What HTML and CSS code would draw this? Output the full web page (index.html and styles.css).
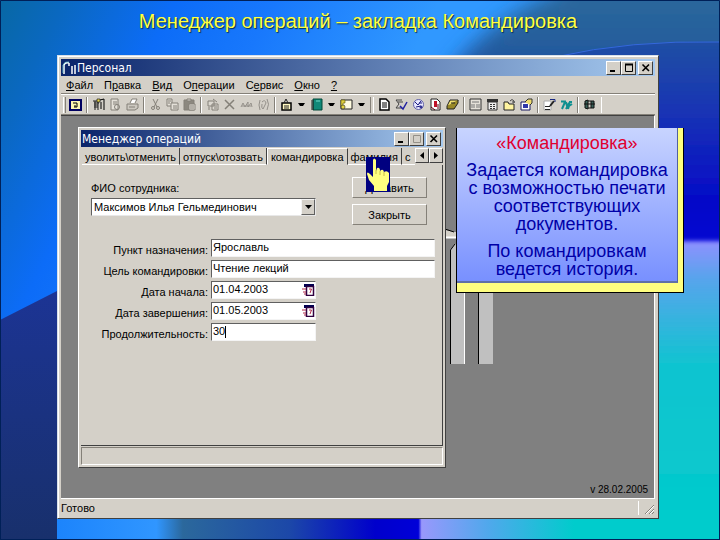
FILE: index.html
```html
<!DOCTYPE html>
<html lang="ru">
  <head>
    <meta charset="UTF-8" />
    <meta name="viewport" content="width=device-width, initial-scale=1.0" />
    <title>Менеджер операций</title>
    <link rel="stylesheet" href="styles.css" />
  </head>
  <body>
    <div class="slide">
      <svg class="backdrop" viewBox="0 0 720 540" preserveAspectRatio="none" aria-hidden="true">
        <defs>
          <linearGradient id="sky" gradientUnits="userSpaceOnUse" x1="0" y1="0" x2="440" y2="220">
            <stop offset="0" stop-color="#0868a4" />
            <stop offset="0.12" stop-color="#0a68c0" />
            <stop offset="0.32" stop-color="#0c6cf8" />
            <stop offset="0.5" stop-color="#1878fc" />
            <stop offset="0.8" stop-color="#3098ff" />
            <stop offset="1" stop-color="#3098ff" />
          </linearGradient>
          <linearGradient id="night" gradientUnits="userSpaceOnUse" x1="0" y1="0" x2="0" y2="241">
            <stop offset="0" stop-color="#2a689c" />
            <stop offset="0.2" stop-color="#245c9c" />
            <stop offset="0.45" stop-color="#1c3cb0" />
            <stop offset="0.85" stop-color="#0000cc" />
            <stop offset="1" stop-color="#0000d8" />
          </linearGradient>
          <linearGradient id="sea" x1="0" y1="0" x2="0" y2="1">
            <stop offset="0" stop-color="#9090ff" />
            <stop offset="0.12" stop-color="#58a4ec" />
            <stop offset="0.4" stop-color="#10c4d0" />
            <stop offset="1" stop-color="#00cccc" />
          </linearGradient>
          <linearGradient id="floor" x1="0" y1="0" x2="1" y2="0">
            <stop offset="0" stop-color="#1c84fc" />
            <stop offset="0.15" stop-color="#3096ff" />
            <stop offset="0.19" stop-color="#2b689c" />
            <stop offset="0.35" stop-color="#1c48a8" />
            <stop offset="0.48" stop-color="#0000cc" />
            <stop offset="0.545" stop-color="#0000d8" />
            <stop offset="0.55" stop-color="#9898fc" />
            <stop offset="0.65" stop-color="#50a8ec" />
            <stop offset="0.78" stop-color="#00cccc" />
            <stop offset="1" stop-color="#00cccc" />
          </linearGradient>
          <linearGradient id="deep" x1="0" y1="0" x2="0" y2="1">
            <stop offset="0" stop-color="#1c3494" />
            <stop offset="1" stop-color="#18306c" />
          </linearGradient>
          <filter id="soft" x="-20%" y="-20%" width="140%" height="140%">
            <feGaussianBlur stdDeviation="10" />
          </filter>
          <filter id="softer" x="-20%" y="-20%" width="140%" height="140%">
            <feGaussianBlur stdDeviation="2" />
          </filter>
        </defs>
        <rect width="720" height="540" fill="url(#sky)" />
        <path d="M450 70Q490 20 560 -10V-40H770V270H450Z" fill="url(#night)" filter="url(#soft)" />
        <path d="M555 57Q630 40 720 42V240H555Z" fill="#1020c0" opacity="0.25" />
        <path d="M555 57Q630 40 720 42" fill="none" stroke="#3468dc" stroke-width="1" />
        <rect x="600" y="241" width="130" height="310" fill="url(#sea)" filter="url(#softer)" />
        <rect x="57" y="510" width="663" height="30" fill="url(#floor)" />
        <path d="M0 320L57 291V540H0Z" fill="url(#deep)" />
        <path d="M.5 540V.5H719.5V540M0 539.5H720" fill="none" stroke="#002058" />
      </svg>

      <h1 class="slide-title">Менеджер операций – закладка Командировка</h1>

      <div class="app">
        <div class="titlebar">
          <svg class="app-icon" width="14" height="14" viewBox="0 0 14 14" aria-hidden="true">
            <path d="M2 13V4Q3 1 7 2M7 2V5M10 5V13M13 4V13" fill="none" stroke="#fff" stroke-width="1.5" />
            <path d="M1 12V4Q3 0 7 1" fill="none" stroke="#7fd0d8" stroke-width="0.8" />
          </svg>
          <span class="caption">Персонал</span>
          <button class="win-btn" aria-label="Свернуть"><svg width="10" height="10"><path d="M1 8H6" stroke="#000" stroke-width="2" /></svg></button>
          <button class="win-btn" aria-label="Развернуть"><svg width="10" height="10"><path d="M1.5 1V8.5H8.500V1M1 1.500H9" fill="none" stroke="#000" /><path d="M1 1.500H9" stroke="#000" stroke-width="2" /></svg></button>
          <button class="win-btn win-close" aria-label="Закрыть"><svg width="10" height="10"><path d="M1.500 1.500L8 8M8 1.500L1.500 8" stroke="#000" stroke-width="1.600" /></svg></button>
        </div>

        <nav class="menu">
          <a href="#"><u>Ф</u>айл</a>
          <a href="#">П<u>р</u>авка</a>
          <a href="#"><u>В</u>ид</a>
          <a href="#">О<u>п</u>ерации</a>
          <a href="#">С<u>е</u>рвис</a>
          <a href="#"><u>О</u>кно</a>
          <a href="#"><u>?</u></a>
        </nav>

        <div class="toolbar">
          <span class="grip"></span>
          <button class="tool" aria-label="Карточка"><svg width="13" height="13"><rect x="1" y="2" width="11" height="10" fill="#fff8b0" stroke="#000060" stroke-width="2" /><path d="M4 5H8V9H5M6 7V9" fill="none" stroke="#000" /></svg></button>
          <span class="sep"></span>
          <button class="tool" aria-label="Структура"><svg width="13" height="13"><path d="M1 3H7M2 5H7M2 7H6M2 9H6M3 3V12M6 4V12" stroke="#222" fill="none" /><path d="M8 2L12 1V12M9 4V11" fill="none" stroke="#000" /><path d="M5 1H8V4H5Z" fill="#e8d850" stroke="#000" stroke-width="0.6" /></svg></button>
          <button class="tool" aria-label="Просмотр"><svg width="13" height="13"><path d="M2 1H9V12H2Z" fill="#e4e0d8" stroke="#848078" /><path d="M4 4H8M4 6H8" stroke="#848078" /><circle cx="8" cy="9" r="2.500" fill="none" stroke="#848078" /></svg></button>
          <button class="tool" aria-label="Печать"><svg width="13" height="13"><path d="M4 5L6 1H11L9 5" fill="#fff" stroke="#848078" /><path d="M1 6H12V10L9 12H1Z" fill="#ccc8c0" stroke="#848078" /><path d="M3 9H9" stroke="#848078" /></svg></button>
          <span class="sep"></span>
          <button class="tool" aria-label="Вырезать"><svg width="13" height="13"><path d="M4 1L8 9M9 1L5 9" stroke="#848078" /><circle cx="4" cy="10" r="1.500" fill="none" stroke="#848078" /><circle cx="9" cy="10" r="1.500" fill="none" stroke="#848078" /></svg></button>
          <button class="tool" aria-label="Копировать"><svg width="13" height="13"><path d="M1 1H6V8H1Z" fill="#e4e0d8" stroke="#848078" /><path d="M5 5H12V12H5Z" fill="#e4e0d8" stroke="#848078" /><path d="M2 3H5M2 5H4M7 8H11M7 10H11" stroke="#848078" /></svg></button>
          <button class="tool" aria-label="Вставить"><svg width="13" height="13"><path d="M1 2H11V12H1Z" fill="#8c887f" stroke="#848078" /><path d="M4 1H8V3H4Z" fill="#d4d0c8" stroke="#848078" /><path d="M6 6H12V12H6Z" fill="#e4e0d8" stroke="#848078" /><path d="M7 8H11M7 10H11" stroke="#848078" /></svg></button>
          <span class="sep"></span>
          <button class="tool" aria-label="Обновить"><svg width="13" height="13"><path d="M2 3H8V8H2ZM6 6H12V12H6Z" fill="#dcd8d0" stroke="#848078" /><path d="M7 1L11 4M3 9V12M8 8H11M8 10H11" stroke="#848078" /></svg></button>
          <button class="tool" aria-label="Удалить"><svg width="13" height="13"><path d="M2 2L11 11M11 2L2 11" stroke="#848078" stroke-width="1.500" /></svg></button>
          <button class="tool" aria-label="Найти"><svg width="13" height="13"><path d="M1 9L3 5L5 9L8 4V9L11 5L12 9M2 8H11" fill="none" stroke="#94908a" /></svg></button>
          <button class="tool" aria-label="Вложение"><svg width="13" height="13"><path d="M3 2Q1 7 3 12M10 1Q13 6 10 12M5 4Q8 1 9 5L6 11Q4 10 5 6" fill="none" stroke="#94908a" /></svg></button>
          <span class="sep"></span>
          <button class="tool" aria-label="Документ"><svg width="13" height="13"><path d="M2 5H11V12H2Z" fill="#fff8c0" stroke="#000" stroke-width="1.500" /><path d="M4 5L6 1L8 5M4 8H9M4 10H9" fill="none" stroke="#222" /></svg></button>
          <button class="drop" aria-label="Список документов"><svg width="7" height="5"><path d="M0 1H7L5 4H2Z" /></svg></button>
          <button class="tool" aria-label="Журнал"><svg width="13" height="13"><path d="M3 1H12V12H3Z" fill="#108878" stroke="#004838" /><path d="M1 3H4M1 5H4M1 7H4M1 9H4M1 11H4" stroke="#222" /><path d="M6 3H10" stroke="#70d8c8" /></svg></button>
          <button class="drop" aria-label="Список журналов"><svg width="7" height="5"><path d="M0 1H7L5 4H2Z" /></svg></button>
          <button class="tool" aria-label="Заметка"><svg width="13" height="13"><path d="M1 2H12V11H1Z" fill="#fffce0" stroke="#222" /><path d="M1 2H5V5H3V9H1Z" fill="#e0d040" stroke="#605800" stroke-width="0.600" /><circle cx="3" cy="9" r="2" fill="#e8d840" stroke="#222" stroke-width="0.600" /></svg></button>
          <button class="drop" aria-label="Список заметок"><svg width="7" height="5"><path d="M0 1H7L5 4H2Z" /></svg></button>
          <span class="sep sep-double"></span>
          <button class="tool" aria-label="Приказ"><svg width="13" height="13"><path d="M2 1H8L11 4V12H2Z" fill="#fff" stroke="#000" stroke-width="1.500" /><path d="M4 5H9M4 7H9M4 9H9" stroke="#000" /></svg></button>
          <button class="tool" aria-label="Проверка"><svg width="13" height="13"><path d="M1 2H7M3 4H8M1 10H7M1 2L4 6L1 10" fill="none" stroke="#444" /><path d="M5 8L8 11L12 4" fill="none" stroke="#2020a0" stroke-width="1.500" /></svg></button>
          <button class="tool" aria-label="Табель"><svg width="13" height="13"><circle cx="6.500" cy="6.500" r="5" fill="#e8e8ff" stroke="#6060a8" /><path d="M3 4L6 7L9 3M4 9L9 8M7 5H10" stroke="#181880" fill="none" /><circle cx="9" cy="9" r="1.500" fill="#303090" /></svg></button>
          <button class="tool" aria-label="Отчёт"><svg width="13" height="13"><path d="M2 1H8L11 4V12H2Z" fill="#fff" stroke="#222" /><path d="M5 3H8V9H5Z" fill="#c01028" /><path d="M2 9L6 12M9 6V11" stroke="#600010" /></svg></button>
          <button class="tool" aria-label="Книга"><svg width="13" height="13"><path d="M4 2H12L9 8H1Z" fill="#f0e070" stroke="#222" /><path d="M1 8V11H8L12 5V2" fill="#988828" stroke="#222" /><path d="M5 5H9" stroke="#222" /></svg></button>
          <span class="sep"></span>
          <button class="tool" aria-label="Таблица"><svg width="13" height="13"><path d="M1 1H12V12H1Z" fill="#e4e0d8" stroke="#333" /><path d="M3 4H10M3 6V10M5 6V10M8 6V10M10 6V10" stroke="#777" /></svg></button>
          <button class="tool" aria-label="Календарь"><svg width="13" height="13"><path d="M1 1H12V4H1Z" fill="#333" /><path d="M2 4H11V12H2Z" fill="#eee" stroke="#333" /><path d="M4 6.500H9M4 8.500H9M4 10.500H9" stroke="#333" stroke-dasharray="2 1" /></svg></button>
          <button class="tool" aria-label="Папка"><svg width="13" height="13"><path d="M1 4H5L6 6H11V12H1Z" fill="#fff4a0" stroke="#222" /><path d="M7 3Q9 0 11 3V5M9 4H12" fill="none" stroke="#444" /></svg></button>
          <button class="tool" aria-label="Свойства"><svg width="13" height="13"><path d="M1 4H10V12H1Z" fill="#fff" stroke="#181860" /><path d="M3 6H8V10H3Z" fill="#3038a8" /><path d="M5 4L8 1H12V5L10 7" fill="#f0dc70" stroke="#333" /></svg></button>
          <span class="sep"></span>
          <button class="tool" aria-label="Изменить"><svg width="13" height="13"><path d="M1 3H8V12H1Z" fill="#fff" stroke="#aaa" /><path d="M2 8.500H7M2 11.500H7" stroke="#222" /><path d="M7 8L11 3" stroke="#222" stroke-width="2" /><path d="M7 1.500H12V4" fill="none" stroke="#182880" /></svg></button>
          <button class="tool" aria-label="Тип"><svg width="13" height="13"><path d="M1 3.500H6M5 4L2 11M6 4L7 8L10 4L6 11M9 4H12M12 6L9 8L8 11" fill="none" stroke="#109090" stroke-width="2" /></svg></button>
          <span class="sep"></span>
          <button class="tool" aria-label="Помощь"><svg width="13" height="13"><path d="M2 3L5 2V11L2 10ZM8 3H11V10H8Z" fill="#386058" stroke="#111" /><path d="M5 3H8M5 10H8M1 6H12" stroke="#111" /></svg></button>
          <span class="sep sep-end"></span>
        </div>

        <main class="workspace">
          <svg class="sheet" width="50" height="140" viewBox="0 0 50 140" aria-hidden="true">
            <path d="M0 6L9 8H50V13H0Z" fill="#d4d0c8" />
            <path d="M0 5L9 8" stroke="#000" />
            <path d="M0 13.500H50" stroke="#fff" stroke-width="2" />
            <path d="M5 26L10 20H19V140H5Z" fill="#c0c0c0" />
            <path d="M5.500 140V26L10 20" fill="none" stroke="#000" />
            <path d="M19.500 20V140" stroke="#fff" />
            <path d="M33 20H48V140H33Z" fill="#c0c0c0" />
            <path d="M33.500 20V140" stroke="#000" />
          </svg>

          <section class="dialog">
            <div class="titlebar">
              <span class="caption">Менеджер операций</span>
              <button class="win-btn" aria-label="Свернуть"><svg width="10" height="10"><path d="M1 8H6" stroke="#000" stroke-width="2" /></svg></button>
              <button class="win-btn" aria-label="Развернуть" disabled><svg width="10" height="10"><path d="M1.500 1.500H8.500V8.500H1.500Z" fill="none" stroke="#949088" /></svg></button>
              <button class="win-btn win-close" aria-label="Закрыть"><svg width="10" height="10"><path d="M1.500 1.500L8 8M8 1.500L1.500 8" stroke="#000" stroke-width="1.600" /></svg></button>
            </div>

            <div class="tabs">
              <button class="tab">уволить\отменить</button>
              <button class="tab">отпуск\отозвать</button>
              <button class="tab active">командировка</button>
              <button class="tab">фамилия</button>
              <button class="tab tab-last">с</button>
              <button class="scroll" aria-label="Назад"><svg width="4" height="7"><path d="M4 0V7L0 3.500Z" /></svg></button>
              <button class="scroll" aria-label="Вперёд"><svg width="4" height="7"><path d="M0 0V7L4 3.500Z" /></svg></button>
            </div>

            <form class="panel">
              <div class="top">
                <div class="person">
                  <label for="fio">ФИО сотрудника:</label>
                  <div class="combo">
                    <select id="fio">
                      <option>Максимов Илья Гельмединович</option>
                    </select>
                    <span class="combo-arrow"><svg width="7" height="4"><path d="M0 0H7L3.500 4Z" /></svg></span>
                  </div>
                </div>
                <div class="actions">
                  <button type="button" class="btn">Добавить</button>
                  <button type="button" class="btn">Закрыть</button>
                </div>
              </div>

              <div class="fields">
                <label for="place">Пункт назначения:</label>
                <input class="field" id="place" type="text" value="Ярославль" />

                <label for="goal">Цель командировки:</label>
                <input class="field" id="goal" type="text" value="Чтение лекций" />

                <label for="start">Дата начала:</label>
                <div class="date">
                  <input class="field" id="start" type="text" value="01.04.2003" />
                  <button type="button" class="cal" aria-label="Выбрать дату"><svg width="13" height="13"><path d="M2 1H12V4H2Z" fill="#000050" /><path d="M4.500 3.500H11.500V12.500H4.500Z" fill="#fff" stroke="#300040" stroke-width="1.500" /><path d="M7 6H9.500L8 10M0 6H4M1 9H4M2 11H4" fill="none" stroke="#b02848" /></svg></button>
                </div>

                <label for="end">Дата завершения:</label>
                <div class="date">
                  <input class="field" id="end" type="text" value="01.05.2003" />
                  <button type="button" class="cal" aria-label="Выбрать дату"><svg width="13" height="13"><path d="M2 1H12V4H2Z" fill="#000050" /><path d="M4.500 3.500H11.500V12.500H4.500Z" fill="#fff" stroke="#300040" stroke-width="1.500" /><path d="M7 6H9.500L8 10M0 6H4M1 9H4M2 11H4" fill="none" stroke="#b02848" /></svg></button>
                </div>

                <label for="days">Продолжительность:</label>
                <div class="date">
                  <input class="field" id="days" type="text" value="30" />
                  <span class="caret"></span>
                </div>
              </div>
            </form>
            <div class="dialog-status"></div>

            <svg class="hand" width="24" height="35" viewBox="0 0 24 35" aria-hidden="true">
              <rect width="24" height="35" fill="#000080" />
              <path d="M7 3Q8 0 10 3V14L11 11Q14 10 14 14Q17 11 18 15Q21 13 23 16V25L21 29V34H8V29L3 23L1 17Q1 14 4 17L7 20Z" fill="#ffff80" />
              <path d="M10 13V17M14 14V18M18 15V19" stroke="#b8a840" stroke-width="0.800" />
            </svg>
          </section>

          <span class="version">v 28.02.2005</span>
        </main>

        <footer class="status">
          <span>Готово</span>
          <span class="status-grip">
            <svg width="14" height="14" aria-hidden="true"><path d="M13 4L4 13M13 8L8 13M13 11L11 13" stroke="#848078" /><path d="M13 5L5 13M13 9L9 13" stroke="#fff" /></svg>
          </span>
        </footer>
      </div>

      <aside class="callout">
        <div class="callout-body">
          <p class="callout-head">«Командировка»</p>
          <p>Задается командировка с возможностью печати соответствующих документов.</p>
          <p>По командировкам ведется история.</p>
        </div>
      </aside>
    </div>
  </body>
</html>
```

FILE: styles.css
```css
* {
  box-sizing: border-box;
}

body {
  margin: 0;
  font-family: "Liberation Sans", Arial, sans-serif;
  font-size: 11px;
  color: #000;
}

button,
input,
select {
  font: inherit;
  color: inherit;
  margin: 0;
  padding: 0;
}

svg {
  display: block;
}

.slide {
  position: relative;
  display: flex;
  flex-direction: column;
  min-height: 100vh;
  padding: 10px 61px 21px 57px;
  overflow: hidden;
}

.backdrop {
  position: absolute;
  inset: 0;
  width: 100%;
  height: 100%;
}

.slide-title {
  position: relative;
  margin: 0 0 23px;
  font-size: 20px;
  line-height: 22px;
  font-weight: 400;
  text-align: center;
  color: #ffff40;
  text-shadow: 1px 1px 1px #003050;
}

/* main window */
.app {
  position: relative;
  flex: 1;
  display: flex;
  flex-direction: column;
  padding: 3px 3px 2px;
  background-color: #d4d0c8;
  border: 1px solid #d8e0e8;
  border-right-color: #404040;
  border-bottom-color: #404040;
  box-shadow: inset 1px 1px #fff;
}

.titlebar {
  display: flex;
  align-items: center;
  height: 17px;
  padding-right: 2px;
  background: linear-gradient(to right, #0a246a, #a6caf0);
  color: #fff;
}

.app-icon {
  margin-left: 1px;
}

.caption {
  flex: 1;
  padding-left: 1px;
  font-family: "DejaVu Sans Condensed", "DejaVu Sans", sans-serif;
  font-size: 12px;
}

.win-btn {
  display: flex;
  align-items: center;
  justify-content: center;
  width: 15px;
  height: 14px;
  background-color: #d4d0c8;
  border: 1px solid #fff;
  border-right-color: #404040;
  border-bottom-color: #404040;
}

.win-close {
  margin-left: 2px;
}

.menu {
  display: flex;
  align-items: center;
  gap: 11px;
  height: 18px;
  padding: 0 5px;
  border-bottom: 1px solid #848078;
}

.menu a {
  color: #000;
  text-decoration: none;
}

.toolbar {
  display: flex;
  align-items: center;
  height: 21px;
  padding: 0 2px;
  border-top: 1px solid #fff;
  border-bottom: 1px solid #848078;
}

.grip {
  width: 3px;
  height: 16px;
  margin-right: 1px;
  border-left: 1px solid #fff;
  border-right: 1px solid #848078;
}

.tool,
.drop {
  display: flex;
  align-items: center;
  justify-content: center;
  width: 17px;
  height: 16px;
  background: none;
  border: 0;
}

.drop {
  width: 13px;
}

.sep {
  width: 2px;
  height: 16px;
  margin: 0 2px;
  border-left: 1px solid #848078;
  border-right: 1px solid #fff;
}

.sep-double {
  width: 4px;
}

.sep-end {
  border-left: 0;
}

.workspace {
  position: relative;
  flex: 1;
  background-color: #808080;
  border-top: 1px solid #404040;
  border-right: 1px solid #fff;
  border-bottom: 1px solid #fff;
}

.sheet {
  position: absolute;
  left: 384px;
  top: 108px;
}

.version {
  position: absolute;
  right: 6px;
  bottom: 3px;
  font-size: 10px;
}

.status {
  display: flex;
  align-items: center;
  justify-content: space-between;
  height: 17px;
}

.status-grip {
  display: flex;
  justify-content: flex-end;
  width: 17px;
  border-left: 1px solid #fff;
}

/* child window */
.dialog {
  position: absolute;
  left: 17px;
  top: 11px;
  bottom: 30px;
  width: 368px;
  display: flex;
  flex-direction: column;
  padding: 2px;
  background-color: #d4d0c8;
  border: 1px solid #fff;
  border-right-color: #404040;
  border-bottom-color: #404040;
}

.tabs {
  display: flex;
  height: 18px;
  padding: 1px 0 0 1px;
}

.tab {
  padding: 1px 3px 0;
  background-color: #d4d0c8;
  border: 0;
  border-right: 1px solid #404040;
  border-bottom: 1px solid #fff;
  white-space: nowrap;
}

.tab.active {
  padding-top: 0;
  border-top: 1px solid #fff;
  border-left: 1px solid #fff;
  border-bottom: 1px solid #d4d0c8;
}

.tab-last {
  flex: 1;
  border-right: 0;
  text-align: left;
}

.scroll {
  flex-shrink: 0;
  display: flex;
  align-items: center;
  justify-content: center;
  width: 14px;
  height: 15px;
  background-color: #d4d0c8;
  border: 1px solid #fff;
  border-right-color: #404040;
  border-bottom-color: #404040;
}

.panel {
  flex: 1;
  padding: 12px 7px 0 10px;
  border-right: 1px solid #404040;
  border-bottom: 1px solid #404040;
}

.top {
  display: flex;
  justify-content: space-between;
  padding-right: 8px;
}

.person {
  width: 225px;
  padding-top: 4px;
}

.person label {
  display: block;
  margin-bottom: 3px;
  line-height: 14px;
}

.combo {
  position: relative;
}

.combo select {
  appearance: none;
  display: block;
  width: 100%;
  height: 18px;
  padding-left: 2px;
  background-color: #fff;
  border: 1px solid #606060;
  border-right-color: #e8e8e8;
  border-bottom-color: #e8e8e8;
  border-radius: 0;
}

.combo-arrow {
  position: absolute;
  top: 1px;
  right: 1px;
  display: flex;
  align-items: center;
  justify-content: center;
  width: 14px;
  height: 16px;
  background-color: #d4d0c8;
  border: 1px solid #f4f4f4;
  border-right-color: #606060;
  border-bottom-color: #606060;
  pointer-events: none;
}

.actions {
  display: flex;
  flex-direction: column;
  gap: 6px;
}

.btn {
  width: 75px;
  height: 21px;
  background-color: #d4d0c8;
  border: 1px solid #fff;
  border-right-color: #848078;
  border-bottom-color: #848078;
}

.fields {
  display: grid;
  grid-template-columns: 117px 1fr;
  column-gap: 3px;
  row-gap: 3px;
  margin-top: 14px;
}

.fields label {
  padding-top: 5px;
  line-height: 13px;
  text-align: right;
  white-space: nowrap;
}

.field {
  width: 100%;
  height: 18px;
  padding: 0 1px 2px;
  background-color: #fff;
  border: 1px solid #606060;
  border-right-color: #f4f4f4;
  border-bottom-color: #f4f4f4;
}

.date {
  position: relative;
  width: 105px;
}

.cal {
  position: absolute;
  right: 1px;
  top: 2px;
  background: none;
  border: 0;
}

.caret {
  position: absolute;
  left: 14px;
  top: 3px;
  width: 1px;
  height: 12px;
  background-color: #000;
}

.dialog-status {
  height: 18px;
  margin-top: 1px;
  border: 1px solid #848078;
  border-right-color: #fff;
  border-bottom-color: #fff;
}

.hand {
  position: absolute;
  left: 287px;
  top: 29px;
}

/* yellow note */
.callout {
  position: absolute;
  left: 456px;
  top: 128px;
  width: 228px;
  padding: 0 5px 9px 0;
  background-color: #ffff80;
  border: 1px solid #000;
  border-top: 0;
  font-size: 18px;
  line-height: 18px;
  text-align: center;
  color: #0000a8;
}

.callout-body {
  padding: 6px 8px 3px;
  background: linear-gradient(to bottom, #c8d4ff, #7890ff);
  border-right: 1px solid #5060a0;
  border-bottom: 2px solid #6070a8;
}

.callout p {
  margin: 0 0 9px;
}

.callout p:last-child {
  margin-bottom: 0;
}

.callout .callout-head {
  color: #e00030;
}
```
